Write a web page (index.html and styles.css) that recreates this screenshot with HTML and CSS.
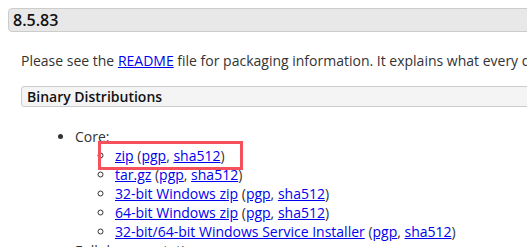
FILE: index.html
```html
<!DOCTYPE html>
<html lang="en">
<head>
    <meta charset="UTF-8">
    <meta name="viewport" content="width=device-width, initial-scale=1.0">
    <title>Tomcat 8 Downloads</title>
    <link rel="stylesheet" href="styles.css">
</head>
<body>

    <!-- Release section -->
    <div class="release">
        <h3 class="release-title">8.5.83</h3>

        <div class="release-body">
            <p class="intro">Please see the <a href="#">README</a> file for packaging information. It explains what every distribution contains.</p>

            <h4 class="dist-title">Binary Distributions</h4>

            <ul class="dist-list">
                <li>Core:
                    <ul class="sub-list">
                        <li class="marked"><a href="#">zip</a> (<a href="#">pgp</a>, <a href="#">sha512</a>)</li>
                        <li><a href="#">tar.gz</a> (<a href="#">pgp</a>, <a href="#">sha512</a>)</li>
                        <li><a href="#">32-bit Windows zip</a> (<a href="#">pgp</a>, <a href="#">sha512</a>)</li>
                        <li><a href="#">64-bit Windows zip</a> (<a href="#">pgp</a>, <a href="#">sha512</a>)</li>
                        <li><a href="#">32-bit/64-bit Windows Service Installer</a> (<a href="#">pgp</a>, <a href="#">sha512</a>)</li>
                    </ul>
                </li>
                <li>Full documentation:
                    <ul class="sub-list">
                        <li><a href="#">tar.gz</a> (<a href="#">pgp</a>, <a href="#">sha512</a>)</li>
                    </ul>
                </li>
            </ul>
        </div>
    </div>

</body>
</html>
```

FILE: styles.css
```css
body {
    font-family: 'Open Sans', sans-serif;
    font-size: 14px;
    line-height: 19px;
    color: #333;
    background: white;
    margin: 0;
    padding: 8px 0 0 8px;
    overflow: hidden;
}

a {
    color: #0000ee;
}

/* Release heading */
.release {
    width: 700px;
}

.release-title {
    margin: 0;
    padding: 1px 4px;
    height: 20px;
    line-height: 20px;
    font-size: 16px;
    font-weight: 600;
    color: #111;
    background: #e8e8e8;
    border: 1px solid #ccc;
    border-radius: 4px;
}

.release-body {
    padding-left: 13px;
}

.intro {
    margin: 19px 0 0 0;
}

/* Binary distributions */
.dist-title {
    margin: 16px 0 0 0;
    padding: 0 5px;
    height: 19px;
    line-height: 19px;
    font-size: 14px;
    font-weight: 600;
    color: #111;
    background: #f4f4f4;
    border: 1px solid #ccc;
    border-radius: 3px;
}

.dist-list {
    margin: 20px 0 0 0;
    padding-left: 54px;
}

.sub-list {
    margin: 0;
    padding-left: 40px;
    list-style: circle;
}

/* Red annotation box */
.marked {
    position: relative;
}

.marked::after {
    content: "";
    position: absolute;
    left: -17px;
    top: -5px;
    width: 139px;
    height: 23px;
    border: 3px solid #f7505d;
}
```
